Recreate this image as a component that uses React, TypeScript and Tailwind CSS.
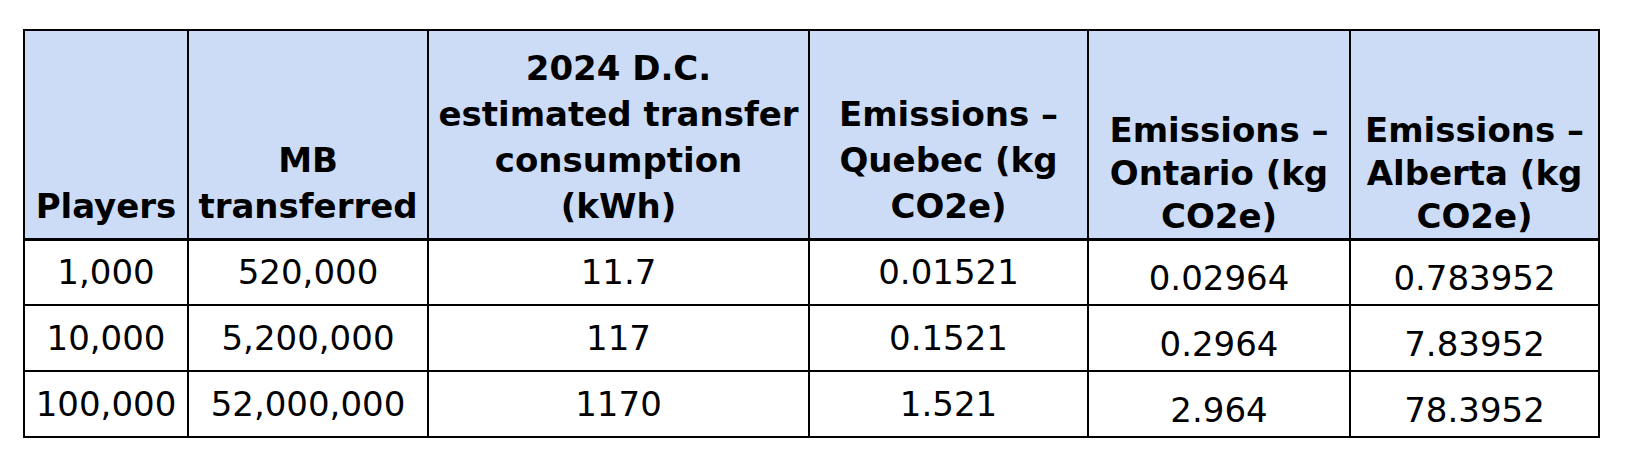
const rows = [
  ["1,000", "520,000", "11.7", "0.01521", "0.02964", "0.783952"],
  ["10,000", "5,200,000", "117", "0.1521", "0.2964", "7.83952"],
  ["100,000", "52,000,000", "1170", "1.521", "2.964", "78.3952"],
];

// header cells: cols 5 and 6 sit a little lower with tighter leading
const headCell =
  "border-2 border-black bg-[#ccdbf6] px-0 text-center align-bottom font-bold";

export default function App() {
  return (
    <div className="min-h-screen bg-white pl-[23px] pt-[29px] font-['DejaVu_Sans',Verdana,sans-serif] text-[34px] text-black">
      <table className="w-[1575px] table-fixed border-collapse">
        <colgroup>
          <col className="w-[164px]" />
          <col className="w-[240px]" />
          <col className="w-[381px]" />
          <col className="w-[279px]" />
          <col className="w-[262px]" />
          <col className="w-[249px]" />
        </colgroup>
        <thead>
          <tr className="h-[209px] border-b-[3px] border-black">
            <th className={`${headCell} pb-[9px] leading-[46px]`}>Players</th>
            <th className={`${headCell} pb-[9px] leading-[46px]`}>
              MB
              <br />
              transferred
            </th>
            <th className={`${headCell} pb-[9px] leading-[46px]`}>
              2024 D.C.
              <br />
              estimated transfer
              <br />
              consumption
              <br />
              (kWh)
            </th>
            <th className={`${headCell} pb-[9px] leading-[46px]`}>
              Emissions –
              <br />
              Quebec (kg
              <br />
              CO2e)
            </th>
            <th className={`${headCell} pb-0 leading-[43px]`}>
              Emissions –
              <br />
              Ontario (kg
              <br />
              CO2e)
            </th>
            <th className={`${headCell} pb-0 leading-[43px]`}>
              Emissions –
              <br />
              Alberta (kg
              <br />
              CO2e)
            </th>
          </tr>
        </thead>
        <tbody>
          {rows.map((row) => (
            <tr key={row[0]} className="h-[66px]">
              {row.map((v, i) => (
                <td
                  key={i}
                  className={
                    i >= 4
                      ? "border-2 border-black p-0 pt-[12px] text-center leading-[40px]"
                      : "border-2 border-black p-0 text-center leading-[40px]"
                  }
                >
                  {v}
                </td>
              ))}
            </tr>
          ))}
        </tbody>
      </table>
    </div>
  );
}
